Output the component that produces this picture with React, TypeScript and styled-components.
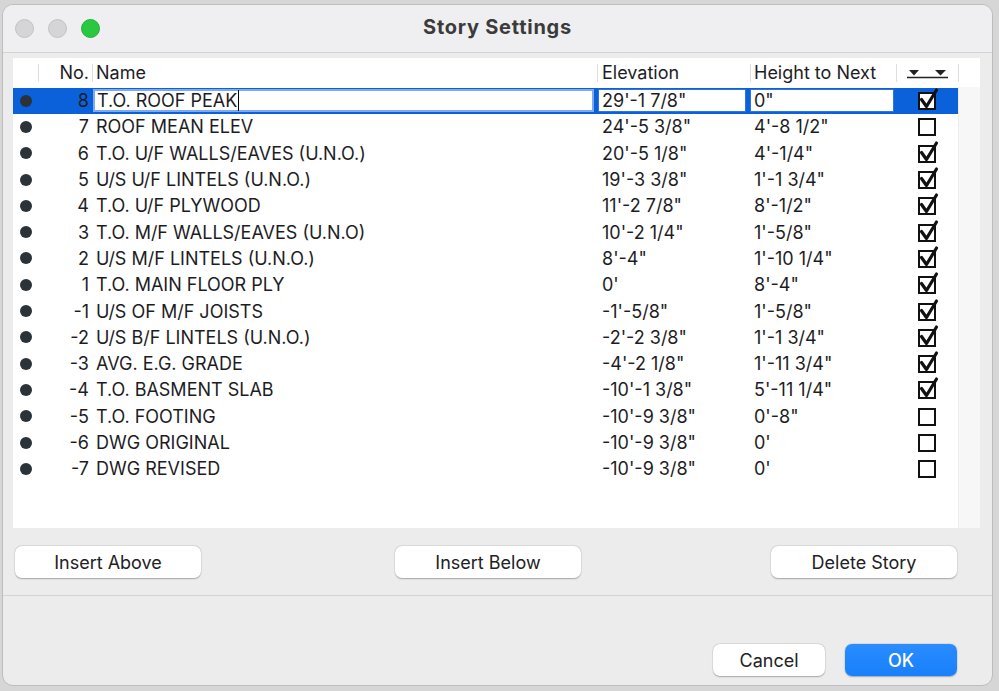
import React from "react";
import styled, { createGlobalStyle } from "styled-components";

const GlobalStyle = createGlobalStyle`
  html, body {
    margin: 0;
    padding: 0;
    background: #d6d6d6;
    font-family: Inter, "Liberation Sans", Arial, sans-serif;
    -webkit-font-smoothing: antialiased;
  }
  #root {
    width: 999px;
    height: 691px;
    overflow: hidden;
  }
`;

type Story = {
  no: number;
  name: string;
  elevation: string;
  height: string;
  shown: boolean;
};

const stories: Story[] = [
  { no: 8, name: "T.O. ROOF PEAK", elevation: `29'-1 7/8"`, height: `0"`, shown: true },
  { no: 7, name: "ROOF MEAN ELEV", elevation: `24'-5 3/8"`, height: `4'-8 1/2"`, shown: false },
  { no: 6, name: "T.O. U/F WALLS/EAVES (U.N.O.)", elevation: `20'-5 1/8"`, height: `4'-1/4"`, shown: true },
  { no: 5, name: "U/S U/F LINTELS (U.N.O.)", elevation: `19'-3 3/8"`, height: `1'-1 3/4"`, shown: true },
  { no: 4, name: "T.O. U/F PLYWOOD", elevation: `11'-2 7/8"`, height: `8'-1/2"`, shown: true },
  { no: 3, name: "T.O. M/F WALLS/EAVES (U.N.O)", elevation: `10'-2 1/4"`, height: `1'-5/8"`, shown: true },
  { no: 2, name: "U/S M/F LINTELS (U.N.O.)", elevation: `8'-4"`, height: `1'-10 1/4"`, shown: true },
  { no: 1, name: "T.O. MAIN FLOOR PLY", elevation: `0'`, height: `8'-4"`, shown: true },
  { no: -1, name: "U/S OF M/F JOISTS", elevation: `-1'-5/8"`, height: `1'-5/8"`, shown: true },
  { no: -2, name: "U/S B/F LINTELS (U.N.O.)", elevation: `-2'-2 3/8"`, height: `1'-1 3/4"`, shown: true },
  { no: -3, name: "AVG. E.G. GRADE", elevation: `-4'-2 1/8"`, height: `1'-11 3/4"`, shown: true },
  { no: -4, name: "T.O. BASMENT SLAB", elevation: `-10'-1 3/8"`, height: `5'-11 1/4"`, shown: true },
  { no: -5, name: "T.O. FOOTING", elevation: `-10'-9 3/8"`, height: `0'-8"`, shown: false },
  { no: -6, name: "DWG ORIGINAL", elevation: `-10'-9 3/8"`, height: `0'`, shown: false },
  { no: -7, name: "DWG REVISED", elevation: `-10'-9 3/8"`, height: `0'`, shown: false },
];

const COLS = "25px 54px 505px 153px 146px 62px";

const Window = styled.div`
  margin: 4px 0 0 2px;
  width: 991px;
  height: 682px;
  background: #ececec;
  border: 1px solid #bdbdbd;
  border-radius: 11px;
  overflow: hidden;
  display: flex;
  flex-direction: column;
  box-sizing: border-box;
`;

const TitleBar = styled.div`
  height: 48px;
  flex: none;
  box-sizing: border-box;
  background: #efeff1;
  border-bottom: 1px solid #d3d3d3;
  display: grid;
  grid-template-columns: 1fr auto 1fr;
  align-items: center;
  padding: 0 12px;
`;

const Lights = styled.div`
  display: flex;
  gap: 14px;
`;

const Light = styled.span<{ $color: string; $edge: string }>`
  width: 19px;
  height: 19px;
  border-radius: 50%;
  box-sizing: border-box;
  background: ${({ $color }) => $color};
  border: 1px solid ${({ $edge }) => $edge};
`;

const Title = styled.div`
  font-size: 20px;
  font-weight: 700;
  color: #3b3b3b;
  letter-spacing: 0.75px;
  margin-top: -3px;
`;

const Body = styled.div`
  flex: none;
  display: flex;
  flex-direction: column;
  padding: 5px 12px 0 10px;
`;

const Table = styled.div`
  width: 967px;
  height: 470px;
  background: #fff;
  display: flex;
  flex-direction: column;
  font-size: 18px;
  color: #1d1d1f;
`;

const HeaderRow = styled.div`
  height: 29px;
  display: grid;
  grid-template-columns: ${COLS} 22px;
  align-items: center;
  flex: none;
`;

const HeaderCell = styled.div<{ $align?: string; $pad?: number; $sep?: boolean }>`
  position: relative;
  height: 100%;
  display: flex;
  align-items: center;
  justify-content: ${({ $align }) => $align ?? "flex-start"};
  padding: 0 ${({ $align }) => ($align === "flex-end" ? 3 : 0)}px 0
    ${({ $pad }) => $pad ?? 4}px;
  box-sizing: border-box;
  &::before {
    content: "";
    display: ${({ $sep }) => ($sep === false ? "none" : "block")};
    position: absolute;
    left: 0;
    top: 6px;
    bottom: 5px;
    width: 1px;
    background: #dedede;
  }
`;

const TableBody = styled.div`
  flex: 1;
  display: flex;
`;

const Rows = styled.div`
  width: 945px;
  padding-top: 0.5px;
`;

const Track = styled.div`
  flex: 1;
  background: #f7f7f7;
  border-left: 1px solid #ececec;
`;

const Row = styled.div<{ $selected?: boolean }>`
  height: 26.3px;
  display: grid;
  grid-template-columns: ${COLS};
  align-items: center;
  background: ${({ $selected }) => ($selected ? "#0b61da" : "transparent")};
`;

const Bullet = styled.span`
  width: 12px;
  height: 12px;
  border-radius: 50%;
  background: #2b3238;
  justify-self: center;
`;

const NumCell = styled.div`
  text-align: right;
  padding-right: 3px;
`;

const TextCell = styled.div<{ $pad: number }>`
  padding-left: ${({ $pad }) => $pad}px;
  white-space: nowrap;
`;

const Field = styled.div<{ $ml: number; $mr: number; $focus?: boolean }>`
  margin: 0 ${({ $mr }) => $mr}px 0 ${({ $ml }) => $ml}px;
  height: 23px;
  background: #fff;
  box-sizing: border-box;
  border: ${({ $focus }) => ($focus ? "2px solid #7eaaf0" : "1px solid #2f74e0")};
  display: flex;
  align-items: center;
  padding-left: ${({ $focus }) => ($focus ? 2 : 3)}px;
  white-space: nowrap;
`;

const Caret = styled.span`
  display: inline-block;
  width: 1px;
  height: 21px;
  background: #000;
  margin-left: 1px;
`;

const CheckCell = styled.div`
  display: flex;
  align-items: center;
  padding-left: 20px;
`;

const BoxSvg = styled.svg`
  display: block;
  margin-top: -3px;
`;

const ButtonRow = styled.div`
  display: flex;
  justify-content: space-between;
  width: 942px;
  margin: 18px 0 0 2px;
`;

const Button = styled.button<{ $primary?: boolean }>`
  height: 32px;
  border: none;
  border-radius: 7px;
  font-family: inherit;
  font-size: 18px;
  color: ${({ $primary }) => ($primary ? "#fff" : "#222")};
  font-weight: ${({ $primary }) => ($primary ? 500 : 400)};
  background: ${({ $primary }) =>
    $primary ? "linear-gradient(#2a8cff, #1780fb)" : "#fff"};
  box-shadow: 0 0.5px 1.5px rgba(0, 0, 0, 0.28), 0 0 0 0.5px rgba(0, 0, 0, 0.06);
  padding: 0;
`;

const WideButton = styled(Button)<{ $nudge?: number }>`
  width: 186px;
  margin-left: ${({ $nudge }) => $nudge ?? 0}px;
`;

const Divider = styled.div`
  height: 1px;
  background: #d5d5d5;
  margin-top: 17px;
`;

const Footer = styled.div`
  display: flex;
  justify-content: flex-end;
  gap: 20px;
  padding: 48px 35px 0 0;
`;

const FooterButton = styled(Button)`
  width: 112px;
`;

function Checkbox({ checked }: { checked: boolean }) {
  return (
    <BoxSvg width="24" height="24" viewBox="0 0 24 24">
      <rect x="3" y="6" width="16" height="16" fill="#fff" stroke="#111" strokeWidth="2" />
      {checked && (
        <path
          d="M5.5 12.5 L10.5 19.5 L20.5 3"
          fill="none"
          stroke="#111"
          strokeWidth="3.2"
          strokeLinecap="round"
          strokeLinejoin="round"
        />
      )}
    </BoxSvg>
  );
}

function ShowAllIcon() {
  return (
    <svg width="42" height="14" viewBox="0 0 42 14">
      <polygon points="3,4 13,4 8,9.5" fill="#222" />
      <polygon points="29,4 40,4 34.5,9.5" fill="#222" />
      <line x1="1" y1="11.5" x2="42" y2="11.5" stroke="#222" strokeWidth="1.4" />
    </svg>
  );
}

export default function App() {
  return (
    <>
      <GlobalStyle />
      <Window>
        <TitleBar>
          <Lights>
            <Light $color="#d5d5d7" $edge="#c3c3c5" />
            <Light $color="#d5d5d7" $edge="#c3c3c5" />
            <Light $color="#2ac840" $edge="#20b134" />
          </Lights>
          <Title>Story Settings</Title>
          <span />
        </TitleBar>
        <Body>
          <Table>
            <HeaderRow>
              <HeaderCell $sep={false} />
              <HeaderCell $align="flex-end">No.</HeaderCell>
              <HeaderCell>Name</HeaderCell>
              <HeaderCell $pad={5}>Elevation</HeaderCell>
              <HeaderCell $pad={4}>Height to Next</HeaderCell>
              <HeaderCell $pad={10}>
                <ShowAllIcon />
              </HeaderCell>
              <HeaderCell />
            </HeaderRow>
            <TableBody>
              <Rows>
                {stories.map((s, i) =>
                  i === 0 ? (
                    <Row key={s.no} $selected>
                      <Bullet />
                      <NumCell>{s.no}</NumCell>
                      <Field $ml={1} $mr={3} $focus>
                        {s.name}
                        <Caret />
                      </Field>
                      <Field $ml={1} $mr={4}>
                        {s.elevation}
                      </Field>
                      <Field $ml={0} $mr={2}>
                        {s.height}
                      </Field>
                      <CheckCell>
                        <Checkbox checked={s.shown} />
                      </CheckCell>
                    </Row>
                  ) : (
                    <Row key={s.no}>
                      <Bullet />
                      <NumCell>{s.no}</NumCell>
                      <TextCell $pad={4}>{s.name}</TextCell>
                      <TextCell $pad={5}>{s.elevation}</TextCell>
                      <TextCell $pad={4}>{s.height}</TextCell>
                      <CheckCell>
                        <Checkbox checked={s.shown} />
                      </CheckCell>
                    </Row>
                  )
                )}
              </Rows>
              <Track />
            </TableBody>
          </Table>
          <ButtonRow>
            <WideButton>Insert Above</WideButton>
            <WideButton $nudge={4}>Insert Below</WideButton>
            <WideButton>Delete Story</WideButton>
          </ButtonRow>
        </Body>
        <Divider />
        <Footer>
          <FooterButton>Cancel</FooterButton>
          <FooterButton $primary>OK</FooterButton>
        </Footer>
      </Window>
    </>
  );
}
